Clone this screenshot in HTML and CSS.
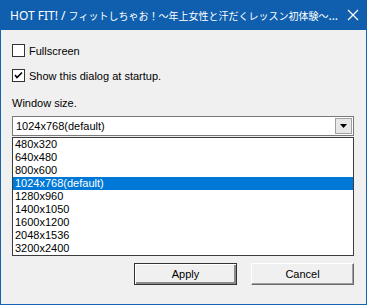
FILE: index.html
```
<!DOCTYPE html>
<html lang="ja">
<head>
    <meta charset="UTF-8">
    <title>HOT FIT! settings</title>
    <link rel="stylesheet" href="styles.css">
</head>
<body>
    <div class="window">
        <div class="titlebar">
            <span class="title">HOT FIT! / <span class="jp">フィットしちゃお！～年上女性と汗だくレッスン初体験～</span>...</span>
            <span class="close">
                <svg width="12" height="12" viewBox="0 0 12 12"><path d="M1 1L11 11M11 1L1 11" stroke="#fff" stroke-width="1.2"/></svg>
            </span>
        </div>
        <div class="client">
            <div class="check-row first">
                <span class="checkbox"></span>
                <span>Fullscreen</span>
            </div>
            <div class="check-row">
                <span class="checkbox">
                    <svg width="11" height="11" viewBox="0 0 11 11"><path d="M2 5L4 7.5L9 2.5" fill="none" stroke="#000" stroke-width="1.6"/></svg>
                </span>
                <span>Show this dialog at startup.</span>
            </div>
            <div class="label">Window size.</div>
            <div class="combo">
                <span class="combo-text">1024x768(default)</span>
                <span class="drop-btn">
                    <svg width="7" height="4" viewBox="0 0 7 4"><path d="M0 0H7L3.5 4Z" fill="#000"/></svg>
                </span>
            </div>
            <ul class="listbox">
                <li>480x320</li>
                <li>640x480</li>
                <li>800x600</li>
                <li class="selected">1024x768(default)</li>
                <li>1280x960</li>
                <li>1400x1050</li>
                <li>1600x1200</li>
                <li>2048x1536</li>
                <li>3200x2400</li>
            </ul>
            <div class="buttons">
                <button class="btn default">Apply</button>
                <button class="btn">Cancel</button>
            </div>
        </div>
    </div>
</body>
</html>
```
FILE: styles.css
```
body {
    margin: 0;
    width: 367px;
    height: 305px;
    overflow: hidden;
    font-family: "Liberation Sans", Arial, sans-serif;
    font-size: 11px;
    color: #000;
}
.window {
    width: 367px;
    height: 305px;
    box-sizing: border-box;
    border: 1px solid #1464b0;
    border-top: none;
    background-color: #f0f0f0;
    display: flex;
    flex-direction: column;
}
.titlebar {
    height: 30px;
    margin: 0 -1px;
    background-color: #0f5fae;
    color: #fff;
    display: flex;
    align-items: center;
    padding-left: 10px;
    font-family: "Noto Sans", "Noto Sans CJK JP", sans-serif;
    font-size: 12px;
}
.title {
    flex: 1;
    white-space: nowrap;
    padding-top: 1px;
}
.title .jp {
    font-size: 10px;
}
.close {
    width: 32px;
    display: flex;
    justify-content: center;
    align-items: center;
}
.client {
    padding: 0 12px 0 11px;
    display: flex;
    flex-direction: column;
}
.check-row {
    display: flex;
    align-items: center;
    height: 13px;
    margin-top: 12px;
}
.check-row.first {
    margin-top: 14px;
}
.checkbox {
    width: 11px;
    height: 11px;
    border: 1px solid #333;
    background-color: #fff;
    margin-right: 4px;
    display: flex;
    align-items: center;
    justify-content: center;
}
.label {
    margin-top: 15px;
    height: 13px;
    line-height: 13px;
}
.combo {
    margin-top: 6px;
    height: 18px;
    border: 1px solid #7a7a7a;
    background-color: #fff;
    display: flex;
    align-items: center;
    justify-content: space-between;
    padding: 0 1px 0 3px;
}
.drop-btn {
    width: 15px;
    height: 14px;
    border: 1px solid #a0a0a0;
    background-color: #e8e8e8;
    display: flex;
    align-items: center;
    justify-content: center;
}
.listbox {
    list-style: none;
    margin: 1px 0 0;
    padding: 0;
    border: 1px solid #3c3c3c;
    background-color: #fff;
}
.listbox li {
    height: 13px;
    line-height: 13px;
    padding-left: 2px;
}
.listbox li.selected {
    background-color: #0078d7;
    color: #fff;
}
.buttons {
    display: flex;
    justify-content: flex-end;
    gap: 14px;
    margin-top: 7px;
}
.btn {
    width: 103px;
    height: 22px;
    font-family: "Liberation Sans", Arial, sans-serif;
    font-size: 11px;
    background-color: #f0f0f0;
    border: 1px solid;
    border-color: #fff #696969 #696969 #fff;
    box-shadow: inset -1px -1px 0 #a0a0a0;
    padding: 0;
}
.btn.default {
    border: 1px solid #333;
    box-shadow: inset 1px 1px 0 #fff, inset -2px -2px 0 #8a8a8a;
}
```
